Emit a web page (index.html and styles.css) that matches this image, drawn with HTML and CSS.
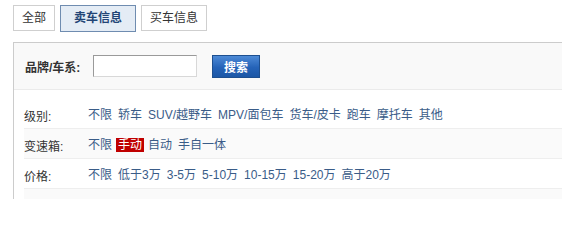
FILE: index.html
```html
<!DOCTYPE html>
<html lang="zh-CN">
<head>
<meta charset="utf-8">
<title>二手车</title>
<link rel="stylesheet" href="styles.css">
</head>
<body>
<div class="page">
  <div class="tabs">
    <a class="tab">全部</a>
    <a class="tab active">卖车信息</a>
    <a class="tab">买车信息</a>
  </div>
  <div class="panel">
    <div class="search">
      <span class="search-label">品牌/车系:</span>
      <input class="search-input" type="text">
      <button class="search-btn">搜索</button>
    </div>
    <div class="filters">
      <div class="row">
        <span class="row-label">级别:</span>
        <div class="row-values">
          <a class="opt">不限</a><a class="opt">轿车</a><a class="opt">SUV/越野车</a><a class="opt">MPV/面包车</a><a class="opt">货车/皮卡</a><a class="opt">跑车</a><a class="opt">摩托车</a><a class="opt">其他</a>
        </div>
      </div>
      <div class="row alt">
        <span class="row-label">变速箱:</span>
        <div class="row-values">
          <a class="opt">不限</a><a class="opt selected">手动</a><a class="opt">自动</a><a class="opt">手自一体</a>
        </div>
      </div>
      <div class="row">
        <span class="row-label">价格:</span>
        <div class="row-values">
          <a class="opt">不限</a><a class="opt">低于3万</a><a class="opt">3-5万</a><a class="opt">5-10万</a><a class="opt">10-15万</a><a class="opt">15-20万</a><a class="opt">高于20万</a>
        </div>
      </div>
      <div class="row-tail"></div>
    </div>
  </div>
</div>
</body>
</html>
```

FILE: styles.css
```css
html, body {
  margin: 0;
  padding: 0;
  background: #fff;
}

.page {
  font-family: "Liberation Sans", "Noto Sans CJK SC", sans-serif;
  font-size: 12px;
  color: #333;
  padding-top: 5px;
}

.tabs {
  display: flex;
  align-items: flex-start;
  padding-left: 13px;
  height: 27px;
  margin-bottom: 10px;
}

.tab {
  display: block;
  height: 24px;
  line-height: 24px;
  padding: 0 8px;
  border: 1px solid #cfcfcf;
  background: #fff;
  color: #333;
  margin-right: 5px;
  cursor: pointer;
}

.tab.active {
  height: 25px;
  line-height: 25px;
  padding: 0 13px;
  border-color: #6f8cb0;
  background: #e4ecf5;
  color: #234576;
  font-weight: bold;
}

.panel {
  margin-left: 13px;
  border-top: 1px solid #cccccc;
  border-left: 1px solid #cccccc;
}

.search {
  display: flex;
  align-items: center;
  height: 46px;
  padding-left: 11px;
  background: #f9f9f9;
  border-bottom: 1px solid #ebebeb;
}

.search-label {
  width: 68px;
  font-weight: bold;
  color: #333;
}

.search-input {
  box-sizing: border-box;
  width: 104px;
  height: 22px;
  margin: 0;
  padding: 0 3px;
  border: 1px solid;
  border-color: #9a9a9a #d8d8d8 #d8d8d8 #9a9a9a;
  background: #fff;
}

.search-btn {
  box-sizing: border-box;
  width: 48px;
  height: 23px;
  margin: 0 0 0 15px;
  padding: 0;
  border: 1px solid #1d4f90;
  background: linear-gradient(#4d8ad6, #2563b8 55%, #1c57a6);
  color: #fff;
  font-family: "Liberation Sans", "Noto Sans CJK SC", sans-serif;
  font-size: 12px;
  font-weight: bold;
}

.filters {
  padding: 9px 0 0 10px;
}

.row {
  display: flex;
  align-items: center;
  height: 26px;
  padding-top: 3px;
  border-bottom: 1px solid #eeeeee;
  background: #fff;
}

.row.alt {
  background: #fafafa;
}

.row-tail {
  height: 10px;
  background: #fafafa;
}

.row-label {
  width: 62px;
  color: #333;
}

.row-values {
  display: flex;
  align-items: center;
  gap: 2px;
}

.opt {
  display: block;
  padding: 0 2px;
  height: 14px;
  line-height: 14px;
  color: #3a5c88;
  white-space: nowrap;
  cursor: pointer;
}

.opt.selected {
  background: #c00000;
  color: #fff;
}
```
